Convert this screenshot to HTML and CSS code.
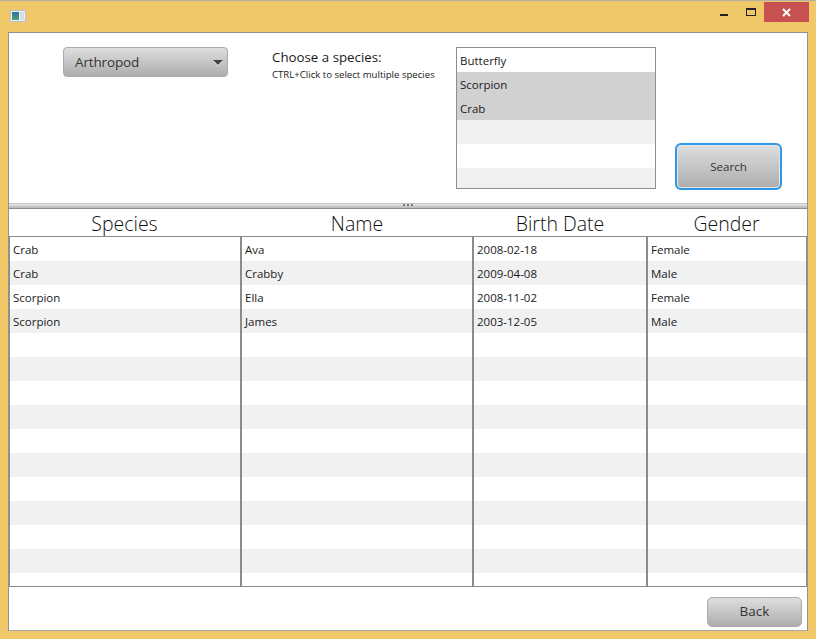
FILE: index.html
```html
<!DOCTYPE html>
<html lang="en">
<head>
<meta charset="utf-8">
<title>Species search</title>
<link rel="stylesheet" href="styles.css">
</head>
<body>
<div class="window">
  <header class="titlebar">
    <svg class="app-icon" width="16" height="12" viewBox="0 0 16 12" aria-hidden="true">
      <defs><linearGradient id="ig" x1="0" y1="0" x2="0" y2="1"><stop offset="0" stop-color="#2f6f9f"/><stop offset="1" stop-color="#4f9f72"/></linearGradient></defs>
      <rect x="0.5" y="0.5" width="15" height="11" fill="#f1f4f6" stroke="#b4c0cc"/>
      <rect x="2" y="2" width="7" height="8" fill="url(#ig)"/>
      <rect x="10" y="2" width="4" height="8" fill="#d8dde1"/>
    </svg>
    <div class="controls">
      <span class="ctl-min"></span>
      <span class="ctl-max"></span>
      <span class="ctl-close">
        <svg width="9" height="9" viewBox="0 0 9 9" aria-hidden="true"><path d="M1 1l7 7M8 1L1 8" stroke="#fff" stroke-width="2" fill="none"/></svg>
      </span>
    </div>
  </header>
  <main class="client">
    <section class="top-pane">
      <div class="combo"><span>Arthropod</span><i class="arrow"></i></div>
      <div class="prompt">
        <div class="prompt-title">Choose a species:</div>
        <div class="prompt-hint">CTRL+Click to select multiple species</div>
      </div>
      <ul class="species-list">
        <li>Butterfly</li>
        <li class="selected">Scorpion</li>
        <li class="selected">Crab</li>
        <li class="even"></li>
        <li></li>
        <li class="even"></li>
      </ul>
      <button class="btn search" type="button">Search</button>
    </section>
    <div class="divider"><span class="grip"></span></div>
    <section class="table">
      <div class="thead">
        <div>Species</div><div>Name</div><div>Birth Date</div><div>Gender</div>
      </div>
      <div class="tbody">
        <div class="row"><div>Crab</div><div>Ava</div><div>2008-02-18</div><div>Female</div></div>
        <div class="row"><div>Crab</div><div>Crabby</div><div>2009-04-08</div><div>Male</div></div>
        <div class="row"><div>Scorpion</div><div>Ella</div><div>2008-11-02</div><div>Female</div></div>
        <div class="row"><div>Scorpion</div><div>James</div><div>2003-12-05</div><div>Male</div></div>
        <div class="row"><div></div><div></div><div></div><div></div></div>
        <div class="row"><div></div><div></div><div></div><div></div></div>
        <div class="row"><div></div><div></div><div></div><div></div></div>
        <div class="row"><div></div><div></div><div></div><div></div></div>
        <div class="row"><div></div><div></div><div></div><div></div></div>
        <div class="row"><div></div><div></div><div></div><div></div></div>
        <div class="row"><div></div><div></div><div></div><div></div></div>
        <div class="row"><div></div><div></div><div></div><div></div></div>
        <div class="row"><div></div><div></div><div></div><div></div></div>
        <div class="row"><div></div><div></div><div></div><div></div></div>
        <div class="row"><div></div><div></div><div></div><div></div></div>
      </div>
    </section>
    <footer class="bottom-bar">
      <button class="btn back" type="button">Back</button>
    </footer>
  </main>
</div>
</body>
</html>
```
FILE: styles.css
```css
* { box-sizing: border-box; }
html, body { margin: 0; height: 100%; }
body { font-family: "Open Sans", "Noto Sans", sans-serif; color: #222; overflow: hidden; }

.window {
  width: 816px; height: 639px;
  background: #f0c769;
  display: flex; flex-direction: column;
  border-top: 1px solid #b4b0a4;
}
.titlebar { height: 31px; flex: none; display: flex; align-items: flex-start; padding-left: 10px; }
.app-icon { margin-top: 9px; }
.controls { margin-left: auto; display: flex; align-items: flex-start; padding-right: 7px; margin-top: 1px; }
.ctl-min { width: 8px; height: 2px; background: #222; margin-top: 12px; margin-right: 18px; }
.ctl-max { width: 10px; height: 8px; border: 1px solid #222; border-top-width: 2px; margin-top: 6px; margin-right: 8px; }
.ctl-close { width: 45px; height: 20px; background: #c75050; display: flex; align-items: center; justify-content: center; }

.client {
  flex: none;
  width: 800px; height: 599px;
  margin-left: 8px;
  background: #fff;
  border: 1px solid #929292;
  border-bottom-color: #a8a8a8;
  display: flex; flex-direction: column;
}

.top-pane { height: 170px; flex: none; display: flex; align-items: flex-start; padding: 14px 0 0 54px; }
.combo {
  width: 165px; height: 30px; flex: none;
  border: 1px solid #ababab; border-radius: 4px;
  background: linear-gradient(#dedede, #adadad);
  display: flex; align-items: center; justify-content: space-between;
  padding: 0 4px 0 11px;
  font-size: 13.5px; letter-spacing: -0.15px; color: #333;
}
.arrow { width: 0; height: 0; border-left: 5px solid transparent; border-right: 5px solid transparent; border-top: 5px solid #444; filter: drop-shadow(0 1px 0 #eee); }
.prompt { width: 184px; margin-left: 44px; flex: none; padding-top: 1px; }
.prompt-title { font-size: 13.3px; line-height: 19px; color: #1a1a1a; }
.prompt-hint { font-size: 9.6px; line-height: 15px; color: #1a1a1a; white-space: nowrap; }
.species-list {
  list-style: none; margin: 0; padding: 0;
  width: 200px; height: 142px; flex: none;
  border: 1px solid #8e8e8e; overflow: hidden;
  font-size: 11.5px; background: #fff;
}
.species-list li { height: 24px; line-height: 25px; padding-left: 3px; color: #1a1a1a; }
.species-list li.selected { background: #d1d1d1; }
.species-list li.even { background: #f1f1f1; }

.btn {
  font-family: inherit; padding: 0; cursor: default;
  border-radius: 5px; color: #333;
  background: linear-gradient(#dedede, #adadad);
  border: 1px solid #ababab;
}
.search {
  width: 107px; height: 47px; flex: none;
  margin: 96px 0 0 19px;
  font-size: 11.5px;
  border: 2px solid #2f97e8;
  border-radius: 6px;
  box-shadow: inset 0 0 0 1px #e6e6e6;
}
.back { width: 95px; height: 30px; font-size: 13.5px; padding-bottom: 2px; }

.divider {
  height: 6px; flex: none;
  background: linear-gradient(#b4b4b4, #e6e6e6 30%, #bdbdbd 80%);
  border-bottom: 1px solid #8c8c8c;
  display: flex; justify-content: center;
}
.grip { width: 10px; height: 2px; margin-top: 1px; background: repeating-linear-gradient(90deg, #777 0 2px, transparent 2px 4px); }

.table { flex: none; height: 378px; display: flex; flex-direction: column; }
.thead, .row { display: grid; grid-template-columns: 233px 232px 174px 159px; }
.thead { height: 28px; flex: none; border-bottom: 1px solid #8c8c8c; }
.thead > div { text-align: center; font-size: 19.5px; font-weight: 300; line-height: 30px; padding-right: 2px; color: #111; }
.tbody { flex: none; height: 350px; overflow: hidden; border-bottom: 1px solid #8c8c8c; }
.row { height: 24px; }
.row:nth-child(even) { background: #f1f1f1; }
.row > div { font-size: 11.5px; line-height: 26px; padding-left: 3px; border-right: 2px solid #8c8c8c; color: #1a1a1a; white-space: nowrap; }
.row > div:first-child { border-left: 1px solid #8c8c8c; }
.row > div:last-child { border-right-width: 1px; }

.bottom-bar { flex: 1; display: flex; justify-content: flex-end; align-items: flex-start; padding: 10px 5px 0 0; }
```
